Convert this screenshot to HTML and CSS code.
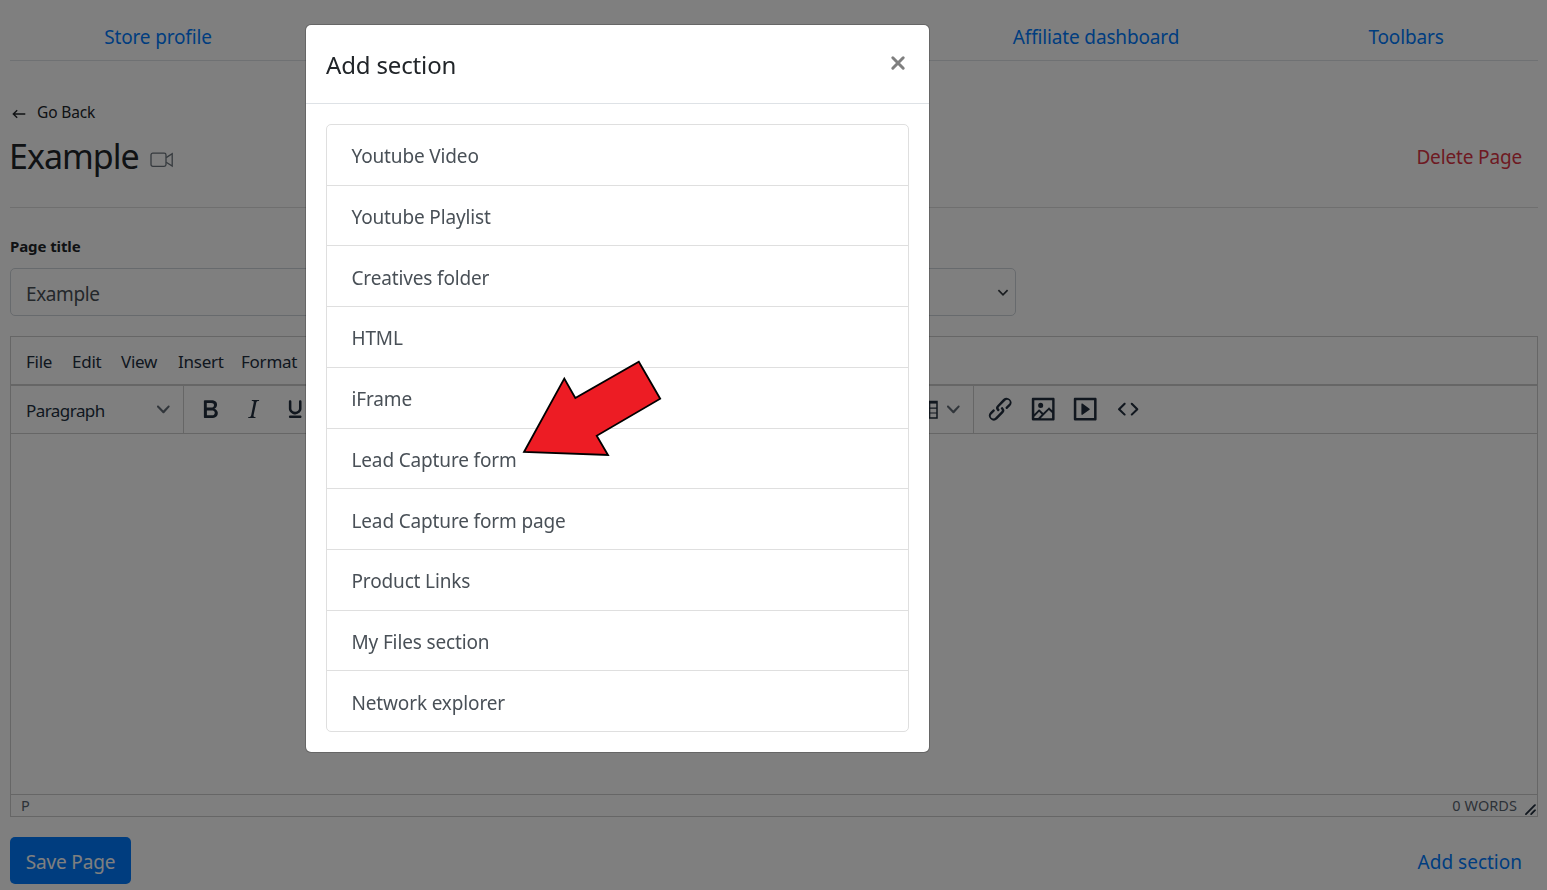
FILE: index.html
```html
<!DOCTYPE html>
<html lang="en">
<head>
<meta charset="utf-8">
<title>Edit page</title>
<link rel="stylesheet" href="styles.css">
</head>
<body>
<div class="page">
  <nav class="tabs">
    <a class="tab">Store profile</a>
    <span></span>
    <a class="tab">Affiliate dashboard</a>
    <a class="tab">Toolbars</a>
  </nav>
  <a class="back">
    <svg width="14" height="10" viewBox="0 0 14 10"><path d="M13.3 5H1.5M5.2 1.2L1.3 5l3.9 3.8" fill="none" stroke="#212529" stroke-width="1.4"/></svg>
    <span>Go Back</span>
  </a>
  <header class="heading">
    <h1>Example</h1>
    <svg class="camera" width="24" height="16" viewBox="0 0 24 16" fill="none" stroke="#6c757d" stroke-width="1.3"><rect x="1" y="1.2" width="15" height="13.2" rx="1.8"/><path d="M16.2 5.6l6-3.8v12.2l-6-3.8"/></svg>
    <a class="delete">Delete Page</a>
  </header>
  <label class="label">Page title</label>
  <div class="fields">
    <div class="field">Example</div>
    <div class="field select">
      <svg width="12" height="8" viewBox="0 0 12 8"><path d="M1.4 1.2L6 5.8l4.6-4.6" fill="none" stroke="#343a40" stroke-width="1.7"/></svg>
    </div>
  </div>
  <section class="editor">
    <div class="menubar"><span class="m1">File</span><span class="m2">Edit</span><span class="m3">View</span><span class="m4">Insert</span><span class="m5">Format</span></div>
    <div class="toolbar">
      <div class="group block"><span>Paragraph</span><svg class="chev" viewBox="0 0 10 10"><path d="M8.7 2.2c.3-.3.8-.3 1 0 .4.4.4.9 0 1.2L5.7 7.8c-.3.3-.9.3-1.2 0L.2 3.4a.8.8 0 010-1.2c.3-.3.8-.3 1.1 0L5 6l3.7-3.8z"/></svg></div>
      <div class="icons text-style">
        <i><svg viewBox="0 0 24 24"><path d="M7.8 19c-.3 0-.5 0-.6-.2l-.2-.5V5.7c0-.2 0-.4.2-.5l.6-.2h5c1.5 0 2.7.3 3.5 1 .7.6 1.1 1.4 1.1 2.5a3 3 0 01-.6 1.9c-.4.6-1 1-1.6 1.2.4.1.9.3 1.3.6s.8.7 1 1.2c.4.4.5 1 .5 1.6 0 1.3-.4 2.3-1.3 3-.8.7-2.1 1-3.8 1H7.8zm5-8.3c.6 0 1.2-.1 1.6-.5.4-.3.6-.7.6-1.3 0-1.1-.8-1.7-2.3-1.7H9.3v3.5h3.4zm.5 6c.7 0 1.3-.1 1.7-.4.4-.4.6-.9.6-1.5s-.2-1-.7-1.4c-.4-.3-1-.4-2-.4H9.4v3.8h4z" fill-rule="evenodd"/></svg></i>
        <i><svg viewBox="0 0 24 24"><path d="M16.7 4.7l-.1.9h-.3c-.6 0-1 0-1.4.3-.3.3-.4.6-.5 1.1l-2.1 9.8v.6c0 .5.4.8 1.4.8h.2l-.2.8H8l.2-.8h.2c1.1 0 1.8-.5 2-1.5l2-9.8.1-.5c0-.6-.4-.8-1.4-.8h-.3l.2-.9h5.8z"/></svg></i>
        <i><svg viewBox="0 0 24 24"><path d="M16 5c.6 0 1 .4 1 1v5.5a4 4 0 01-.4 1.8l-1 1.4a5.3 5.3 0 01-5.5 1 5 5 0 01-1.6-1c-.5-.4-.8-.9-1.1-1.4a4 4 0 01-.4-1.8V6c0-.6.4-1 1-1s1 .4 1 1v5.5c0 .3 0 .6.2 1l.6.7a3.3 3.3 0 002.2.8 3.4 3.4 0 002.2-.8c.3-.2.4-.5.6-.8l.2-.9V6c0-.6.4-1 1-1zM8 17h8c.6 0 1 .4 1 1s-.4 1-1 1H8a1 1 0 010-2z"/></svg></i>
      </div>
      <div class="group table">
        <svg class="grid" viewBox="0 0 24 20" fill="none" stroke="#222f3e"><path d="M1 1.4h22v16.6H1z" stroke-width="1.5"/><path d="M1 2.4h22" stroke-width="2.4"/><path d="M1 8.2h22M1 13h22M8.3 2v16M15.7 2v16" stroke-width="1.2"/></svg>
        <svg class="chev" viewBox="0 0 10 10"><path d="M8.7 2.2c.3-.3.8-.3 1 0 .4.4.4.9 0 1.2L5.7 7.8c-.3.3-.9.3-1.2 0L.2 3.4a.8.8 0 010-1.2c.3-.3.8-.3 1.1 0L5 6l3.7-3.8z"/></svg>
      </div>
      <div class="icons">
        <i><svg viewBox="0 0 24 24"><path d="M6.2 12.3a1 1 0 011.4 1.4l-2.1 2a2 2 0 102.7 2.8l4.8-4.8a1 1 0 000-1.4 1 1 0 111.4-1.3 2.9 2.9 0 010 4L9.6 20a3.9 3.9 0 01-5.5-5.5l2-2zm11.6-.6a1 1 0 01-1.4-1.4l2-2a2 2 0 10-2.6-2.8L11 10.3a1 1 0 000 1.4A1 1 0 119.6 13a2.9 2.9 0 010-4L14.4 4a3.9 3.9 0 015.5 5.5l-2 2z"/></svg></i>
        <i><svg viewBox="0 0 24 24"><path d="M5 15.7l3.3-3.2c.3-.3.7-.3 1 0L12 15l4.1-4c.3-.4.8-.4 1 0l2 1.9V5H5v10.7zM5 18V19h3l2.8-2.9-2-2L5 17.9zm14-3l-2.5-2.4-6.4 6.5H19v-4zM4 3h16c.6 0 1 .4 1 1v16c0 .6-.4 1-1 1H4a1 1 0 01-1-1V4c0-.6.4-1 1-1zm6 8a2 2 0 100-4 2 2 0 000 4z" fill-rule="evenodd"/></svg></i>
        <i><svg viewBox="0 0 24 24"><path d="M4 3h16c.6 0 1 .4 1 1v16c0 .6-.4 1-1 1H4a1 1 0 01-1-1V4c0-.6.4-1 1-1zm1 2v14h14V5H5zm4.8 2.6l5.6 4a.5.5 0 010 .8l-5.6 4A.5.5 0 019 16V8a.5.5 0 01.8-.4z" fill-rule="evenodd"/></svg></i>
        <i><svg viewBox="0 0 24 24"><path d="M9.8 15.7c.3.3.3.8 0 1-.3.4-.9.4-1.2 0l-4.4-4.1a.8.8 0 010-1.2l4.4-4.2c.3-.3.9-.3 1.2 0 .3.3.3.8 0 1.1L6 12l3.8 3.7zM14.2 15.7c-.3.3-.3.8 0 1 .4.4.9.4 1.2 0l4.4-4.1c.3-.3.3-.8 0-1.2l-4.4-4.2a.8.8 0 00-1.2 0c-.3.3-.3.8 0 1.1L18 12l-3.8 3.7z"/></svg></i>
      </div>
    </div>
    <div class="canvas"></div>
    <div class="status"><span>P</span><span class="words">0 WORDS</span>
      <svg class="resize" viewBox="0 0 10 10"><path d="M8.1 1.1A.5.5 0 119 2l-7 7A.5.5 0 111 8l7-7zM8.1 5.1A.5.5 0 119 6l-3 3A.5.5 0 115 8l3-3z"/></svg>
    </div>
  </section>
  <footer class="actions">
    <button class="save">Save Page</button>
    <a class="add">Add section</a>
  </footer>
</div>
<div class="backdrop">
  <div class="modal">
    <div class="modal-head">
      <h2>Add section</h2>
      <svg width="16" height="16" viewBox="0 0 16 16"><path d="M2.8 2.8l10.4 10.4M13.2 2.8L2.8 13.2" stroke="#7f7f7f" stroke-width="3" stroke-linecap="round"/></svg>
    </div>
    <ul class="list">
      <li>Youtube Video</li>
      <li>Youtube Playlist</li>
      <li>Creatives folder</li>
      <li>HTML</li>
      <li>iFrame</li>
      <li>Lead Capture form</li>
      <li>Lead Capture form page</li>
      <li>Product Links</li>
      <li>My Files section</li>
      <li>Network explorer</li>
    </ul>
    <svg class="pointer" width="140" height="98" viewBox="0 0 140 98"><path d="M116.8 1.7L138.2 38.7 74.7 75.7 86 95 2 92 42.3 18.5 53.3 38z" fill="#ed1c24" stroke="#000" stroke-width="1.8"/></svg>
  </div>
</div>
</body>
</html>
```
FILE: styles.css
```css
* { box-sizing: border-box; }
body {
  margin: 0;
  height: 890px;
  overflow: hidden;
  background: #fff;
  color: #212529;
  font: 19px/28px "Noto Sans", "Open Sans", sans-serif;
  letter-spacing: -0.15px;
}
h1, h2, ul { margin: 0; padding: 0; font-weight: 400; }
.page { padding: 0 9px 0 10px; }

.tabs {
  display: grid;
  grid-template-columns: 296px 612px 356px 264px;
  height: 61px;
  border-bottom: 1px solid #dee2e6;
}
.tab { padding-top: 23px; text-align: center; color: #007bff; }

.back {
  display: flex;
  align-items: center;
  gap: 11px;
  height: 24px;
  margin-top: 39px;
  padding-left: 2px;
  font-size: 15.5px;
}
.back svg { margin-top: 4px; }
.heading {
  display: flex;
  align-items: center;
  height: 84px;
  padding-bottom: 19px;
  border-bottom: 1px solid #dfdfdf;
}
h1 { margin-left: -1px; font-size: 34px; line-height: 44px; letter-spacing: -1px; }
.camera { margin: 8px 0 0 11px; }
.delete { margin: 2px 16px 0 auto; color: #dc3545; }

.label { display: block; margin-top: 25px; height: 35px; line-height: 26px; font-size: 15px; font-weight: 700; letter-spacing: -0.1px; }
.fields { display: flex; gap: 20px; }
.field {
  width: 493px;
  height: 48px;
  padding: 11px 15px;
  border: 1px solid #ced4da;
  border-radius: 5px;
  color: #495057;
  letter-spacing: -0.4px;
}
.select { display: flex; justify-content: flex-end; align-items: center; padding: 2px 6px 0; }

.editor { margin-top: 20px; height: 481px; display: flex; flex-direction: column; border: 1px solid #ccc; color: #222f3e; }
.menubar { display: flex; height: 48px; padding: 11px 15px; font-size: 17px; letter-spacing: -0.25px; border-bottom: 1px solid #ccc; }
.menubar span { white-space: nowrap; }
.m1 { width: 46px; }
.m2 { width: 49px; }
.m3 { width: 57px; }
.m4 { width: 63px; }
.toolbar { display: flex; height: 49px; border-top: 1px solid #ccc; border-bottom: 1px solid #ccc; }
.toolbar svg, .resize { fill: #222f3e; }
.group { border-right: 1px solid #ccc; }
.block { display: flex; align-items: center; justify-content: space-between; width: 173px; padding: 2px 13px 0 15px; font-size: 17px; letter-spacing: -0.55px; }
.block .chev { margin-top: -3px; }
.chev { width: 12.7px; height: 12.7px; opacity: 0.7; }
.icons { display: flex; align-items: center; padding-left: 5px; }
.icons i { display: flex; justify-content: center; width: 42.6px; }
.icons svg { width: 30.4px; height: 30.4px; }
.text-style { width: 150px; }
.table { display: flex; align-items: center; justify-content: flex-end; gap: 9px; width: 640px; padding-right: 13px; }
.toolbar .grid { width: 24px; height: 20px; fill: none; }
.canvas { flex: 1; }
.status { display: flex; height: 22px; padding-left: 10px; border-top: 1px solid #ccc; font-size: 14.5px; line-height: 21px; letter-spacing: 0.05px; color: #5a6470; }
.words { margin-left: auto; }
.resize { width: 13px; height: 13px; margin: 8px 0 0 7px; }

.actions { display: flex; justify-content: space-between; margin-top: 20px; }
.save { width: 121px; height: 47px; padding: 3px 0 0; border: 0; border-radius: 5px; background: #007bff; color: #fff; font: inherit; letter-spacing: inherit; }
.add { margin: 11px 16px 0 0; color: #007bff; letter-spacing: 0; }

.backdrop { position: fixed; inset: 0; padding-top: 24px; padding-left: 305px; background: rgba(0, 0, 0, 0.5); }
.modal { position: relative; width: 625px; height: 729px; border: 1px solid rgba(0, 0, 0, 0.2); border-radius: 6px; background: #fff; background-clip: padding-box; }
.modal-head { display: flex; justify-content: space-between; height: 79px; padding: 23px 23px 0 20px; border-bottom: 1px solid #dee2e6; }
.modal-head svg { margin-top: 7px; }
h2 { font-size: 24px; line-height: 34px; }
.list { display: flex; flex-direction: column; margin: 20px 20px 0; height: 608px; border: 1px solid #dfdfdf; border-radius: 5px; list-style: none; }
.list li { flex: 1; display: flex; align-items: center; padding: 3px 24.5px 0; color: #495057; border-bottom: 1px solid #dfdfdf; }
.list li:last-child { border-bottom: 0; }
.pointer { position: absolute; left: 216px; top: 335px; }
```
